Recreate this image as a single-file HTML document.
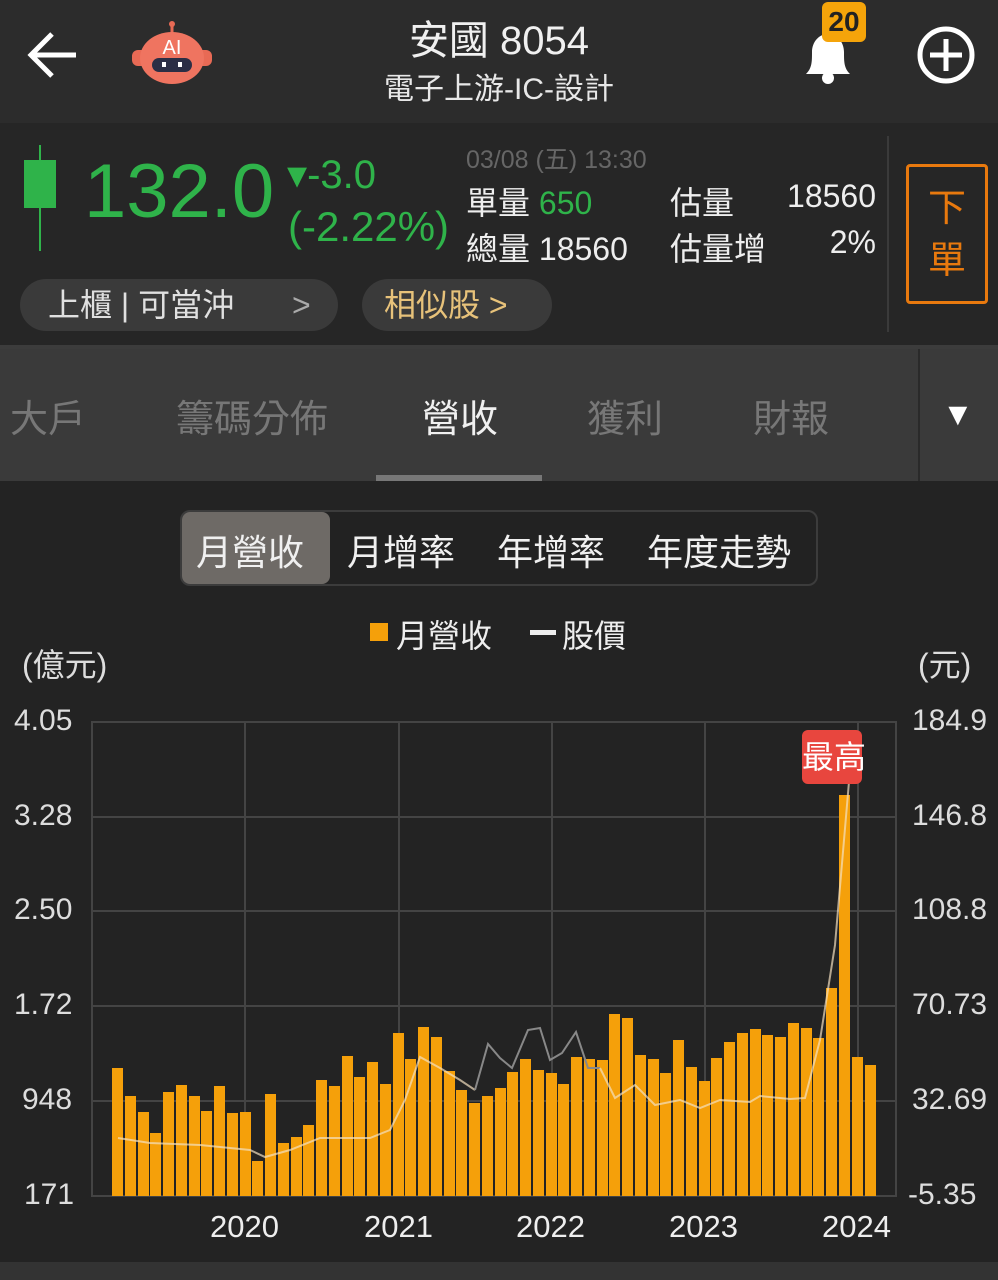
<!DOCTYPE html>
<html><head><meta charset="utf-8"><style>
*{margin:0;padding:0;box-sizing:border-box}
body{width:998px;height:1280px;background:#232323;font-family:"Liberation Sans","Noto Sans CJK TC",sans-serif;color:#e8e8e8;position:relative;overflow:hidden}
.a{position:absolute;white-space:nowrap}
</style></head><body>
<div class="a" style="left:0;top:0;width:998px;height:123px;background:#2c2c2c"></div>
<div class="a" style="left:0;top:123px;width:998px;height:222px;background:#262626"></div>
<div class="a" style="left:0;top:345px;width:998px;height:4px;background:#3c3c3c"></div>
<div class="a" style="left:0;top:349px;width:998px;height:132px;background:#3a3a3a"></div>
<div class="a" style="left:0;top:1262px;width:998px;height:18px;background:#333"></div>
<!-- header -->
<svg class="a" style="left:26px;top:30px" width="56" height="50" viewBox="0 0 56 50"><path d="M50 25H6M26 4L5 25l21 21" stroke="#fff" stroke-width="5" fill="none"/></svg>
<svg class="a" style="left:132px;top:20px" width="80" height="66" viewBox="0 0 80 66"><line x1="40" y1="2" x2="40" y2="14" stroke="#e86a55" stroke-width="3"/><circle cx="40" cy="4" r="3" fill="#e86a55"/><rect x="0" y="30" width="80" height="16" rx="6" fill="#e86a55"/><ellipse cx="40" cy="38" rx="32" ry="26" fill="#ef7460"/><rect x="20" y="38" width="40" height="14" rx="7" fill="#2b2e45"/><rect x="30" y="42" width="4" height="5" fill="#fff"/><rect x="46" y="42" width="4" height="5" fill="#fff"/><text x="40" y="34" font-size="20" fill="#fff" text-anchor="middle" font-family="Liberation Sans">AI</text></svg>
<div class="a" style="left:0;width:998px;text-align:center;top:8px;font-size:40px;color:#f0f0f0">安國 8054</div>
<div class="a" style="left:0;width:998px;text-align:center;top:64px;font-size:30px;color:#e8e8e8">電子上游-IC-設計</div>
<svg class="a" style="left:798px;top:30px" width="60" height="56" viewBox="0 0 60 56"><path d="M8 44c6-6 6-12 6-22 0-10 7-18 16-18s16 8 16 18c0 10 0 16 6 22z" fill="#fff"/><circle cx="30" cy="48" r="6" fill="#fff"/></svg>
<div class="a" style="left:822px;top:2px;width:44px;height:40px;background:#f5a40a;border-radius:6px;color:#222;font-size:28px;font-weight:bold;text-align:center;line-height:40px">20</div>
<svg class="a" style="left:916px;top:25px" width="60" height="60" viewBox="0 0 60 60"><circle cx="30" cy="30" r="26" stroke="#fff" stroke-width="5" fill="none"/><path d="M30 14v32M14 30h32" stroke="#fff" stroke-width="5"/></svg>
<!-- price -->
<div class="a" style="left:39px;top:145px;width:2px;height:106px;background:#2fb34a"></div>
<div class="a" style="left:24px;top:160px;width:32px;height:48px;background:#2fb34a"></div>
<div class="a" style="left:84px;top:148px;font-size:76px;color:#2fb34a">132.0</div>
<div class="a" style="left:287px;top:152px;font-size:40px;color:#2fb34a">▾-3.0</div>
<div class="a" style="left:288px;top:203px;font-size:42px;color:#2fb34a">(-2.22%)</div>
<div class="a" style="left:466px;top:140px;font-size:25px;color:#666">03/08 (五) 13:30</div>
<div class="a" style="left:466px;top:178px;font-size:32px;color:#eee">單量 <span style="color:#2fb34a">650</span></div>
<div class="a" style="left:466px;top:224px;font-size:32px;color:#eee">總量 18560</div>
<div class="a" style="left:670px;top:178px;font-size:32px;color:#eee">估量</div>
<div class="a" style="left:670px;top:224px;font-size:32px;color:#eee">估量增</div>
<div class="a" style="left:760px;width:116px;text-align:right;top:178px;font-size:32px;color:#eee">18560</div>
<div class="a" style="left:760px;width:116px;text-align:right;top:224px;font-size:32px;color:#eee">2%</div>
<div class="a" style="left:887px;top:136px;width:2px;height:196px;background:#3a3a3a"></div>
<div class="a" style="left:906px;top:164px;width:82px;height:140px;border:3px solid #e8790e;border-radius:4px;color:#e8790e;font-size:38px;line-height:52px;text-align:center;padding-top:16px;white-space:normal">下<br>單</div>
<div class="a" style="left:20px;top:279px;width:318px;height:52px;background:#3a3a3a;border-radius:26px;font-size:32px;line-height:52px;padding-left:28px;color:#e0e0e0">上櫃 | 可當沖<span style="position:absolute;left:272px;color:#aaa">&gt;</span></div>
<div class="a" style="left:362px;top:279px;width:190px;height:52px;background:#3a3a3a;border-radius:26px;font-size:32px;line-height:52px;padding-left:22px;color:#e7c27a">相似股 <span style="color:#e7c27a">&gt;</span></div>
<!-- tabs -->
<div class="a" style="left:10px;top:388px;font-size:38px;color:#777">大戶</div>
<div class="a" style="left:176px;top:388px;font-size:38px;color:#777">籌碼分佈</div>
<div class="a" style="left:422px;top:388px;font-size:38px;color:#f0f0f0">營收</div>
<div class="a" style="left:587px;top:388px;font-size:38px;color:#777">獲利</div>
<div class="a" style="left:753px;top:388px;font-size:38px;color:#777">財報</div>
<div class="a" style="left:376px;top:475px;width:166px;height:6px;background:#777"></div>
<div class="a" style="left:918px;top:349px;width:2px;height:132px;background:#2a2a2a"></div>
<div class="a" style="left:942px;top:396px;font-size:32px;color:#fff">▼</div>
<!-- segmented -->
<div class="a" style="left:180px;top:510px;width:638px;height:76px;border:2px solid #3c3c3c;border-radius:10px;background:#222"></div>
<div class="a" style="left:182px;top:512px;width:148px;height:72px;background:#6e6a66;border-radius:8px"></div>
<div class="a" style="left:196px;top:524px;font-size:36px;color:#f0f0f0">月營收</div>
<div class="a" style="left:347px;top:524px;font-size:36px;color:#f0f0f0">月增率</div>
<div class="a" style="left:497px;top:524px;font-size:36px;color:#f0f0f0">年增率</div>
<div class="a" style="left:647px;top:524px;font-size:36px;color:#f0f0f0">年度走勢</div>
<div class="a" style="left:370px;top:623px;width:18px;height:18px;background:#f5a00a"></div>
<div class="a" style="left:396px;top:611px;font-size:32px;color:#eee">月營收</div>
<div class="a" style="left:530px;top:630px;width:26px;height:5px;background:#eee"></div>
<div class="a" style="left:562px;top:611px;font-size:32px;color:#eee">股價</div>
<div class="a" style="left:22px;top:640px;font-size:32px;color:#ddd">(億元)</div>
<div class="a" style="left:918px;top:640px;font-size:32px;color:#ddd">(元)</div>
<!-- axes labels -->
<div class="a" style="left:14px;top:704px;font-size:30px;color:#ddd">4.05</div>
<div class="a" style="left:14px;top:799px;font-size:30px;color:#ddd">3.28</div>
<div class="a" style="left:14px;top:893px;font-size:30px;color:#ddd">2.50</div>
<div class="a" style="left:14px;top:988px;font-size:30px;color:#ddd">1.72</div>
<div class="a" style="left:22px;top:1083px;font-size:30px;color:#ddd">948</div>
<div class="a" style="left:24px;top:1178px;font-size:30px;color:#ddd">171</div>
<div class="a" style="left:912px;top:704px;font-size:30px;color:#ddd">184.9</div>
<div class="a" style="left:912px;top:799px;font-size:30px;color:#ddd">146.8</div>
<div class="a" style="left:912px;top:893px;font-size:30px;color:#ddd">108.8</div>
<div class="a" style="left:912px;top:988px;font-size:30px;color:#ddd">70.73</div>
<div class="a" style="left:912px;top:1083px;font-size:30px;color:#ddd">32.69</div>
<div class="a" style="left:908px;top:1178px;font-size:30px;color:#ddd">-5.35</div>
<div class="a" style="left:210px;top:1209px;font-size:31px;color:#eee">2020</div>
<div class="a" style="left:364px;top:1209px;font-size:31px;color:#eee">2021</div>
<div class="a" style="left:516px;top:1209px;font-size:31px;color:#eee">2022</div>
<div class="a" style="left:669px;top:1209px;font-size:31px;color:#eee">2023</div>
<div class="a" style="left:822px;top:1209px;font-size:31px;color:#eee">2024</div>
<svg class="a" style="left:0;top:0" width="998" height="1280">
<g stroke="#444" stroke-width="2" fill="none">
<rect x="92" y="722" width="804" height="474"/>
<path d="M245 722V1196M399 722V1196M552 722V1196M705 722V1196M858 722V1196M92 817H896M92 911H896M92 1006H896M92 1101H896"/>
</g>
<g fill="#f5a00a">
<rect x="112" y="1068" width="11" height="128"/><rect x="125" y="1096" width="11" height="100"/><rect x="138" y="1112" width="11" height="84"/><rect x="150" y="1133" width="11" height="63"/><rect x="163" y="1092" width="11" height="104"/><rect x="176" y="1085" width="11" height="111"/><rect x="189" y="1096" width="11" height="100"/><rect x="201" y="1111" width="11" height="85"/><rect x="214" y="1086" width="11" height="110"/><rect x="227" y="1113" width="11" height="83"/><rect x="240" y="1112" width="11" height="84"/><rect x="252" y="1161" width="11" height="35"/><rect x="265" y="1094" width="11" height="102"/><rect x="278" y="1143" width="11" height="53"/><rect x="291" y="1137" width="11" height="59"/><rect x="303" y="1125" width="11" height="71"/><rect x="316" y="1080" width="11" height="116"/><rect x="329" y="1086" width="11" height="110"/><rect x="342" y="1056" width="11" height="140"/><rect x="354" y="1077" width="11" height="119"/><rect x="367" y="1062" width="11" height="134"/><rect x="380" y="1084" width="11" height="112"/><rect x="393" y="1033" width="11" height="163"/><rect x="405" y="1059" width="11" height="137"/><rect x="418" y="1027" width="11" height="169"/><rect x="431" y="1037" width="11" height="159"/><rect x="444" y="1071" width="11" height="125"/><rect x="456" y="1090" width="11" height="106"/><rect x="469" y="1103" width="11" height="93"/><rect x="482" y="1096" width="11" height="100"/><rect x="495" y="1088" width="11" height="108"/><rect x="507" y="1072" width="11" height="124"/><rect x="520" y="1059" width="11" height="137"/><rect x="533" y="1070" width="11" height="126"/><rect x="546" y="1073" width="11" height="123"/><rect x="558" y="1084" width="11" height="112"/><rect x="571" y="1057" width="11" height="139"/><rect x="584" y="1059" width="11" height="137"/><rect x="597" y="1060" width="11" height="136"/><rect x="609" y="1014" width="11" height="182"/><rect x="622" y="1018" width="11" height="178"/><rect x="635" y="1055" width="11" height="141"/><rect x="648" y="1059" width="11" height="137"/><rect x="660" y="1073" width="11" height="123"/><rect x="673" y="1040" width="11" height="156"/><rect x="686" y="1067" width="11" height="129"/><rect x="699" y="1081" width="11" height="115"/><rect x="711" y="1058" width="11" height="138"/><rect x="724" y="1042" width="11" height="154"/><rect x="737" y="1033" width="11" height="163"/><rect x="750" y="1029" width="11" height="167"/><rect x="762" y="1035" width="11" height="161"/><rect x="775" y="1037" width="11" height="159"/><rect x="788" y="1023" width="11" height="173"/><rect x="801" y="1028" width="11" height="168"/><rect x="813" y="1038" width="11" height="158"/><rect x="826" y="988" width="11" height="208"/><rect x="839" y="795" width="11" height="401"/><rect x="852" y="1057" width="11" height="139"/><rect x="865" y="1065" width="11" height="131"/>
</g>
<polyline fill="none" stroke="#f3e0c0" stroke-opacity="0.7" stroke-width="2" points="118,1138 150,1143 200,1145 250,1150 265,1157 290,1150 320,1138 370,1138 390,1130 405,1100 420,1057 440,1068 460,1080 475,1090"/>
<polyline fill="none" stroke="#888" stroke-width="2" points="475,1090 488,1044 500,1058 512,1068 528,1030 540,1028 550,1060 562,1053 576,1032 588,1068 600,1068"/>
<polyline fill="none" stroke="#f3e0c0" stroke-opacity="0.7" stroke-width="2" points="600,1068 615,1098 635,1085 655,1105 680,1100 700,1108 720,1100 750,1102 760,1096 790,1099 805,1098 820,1040 835,945 850,770 858,760"/>
</svg>
<div class="a" style="left:802px;top:730px;width:60px;height:54px;background:#e8463e;border-radius:6px;font-size:32px;color:#fff;text-align:center;line-height:54px">最高</div>
</body></html>
